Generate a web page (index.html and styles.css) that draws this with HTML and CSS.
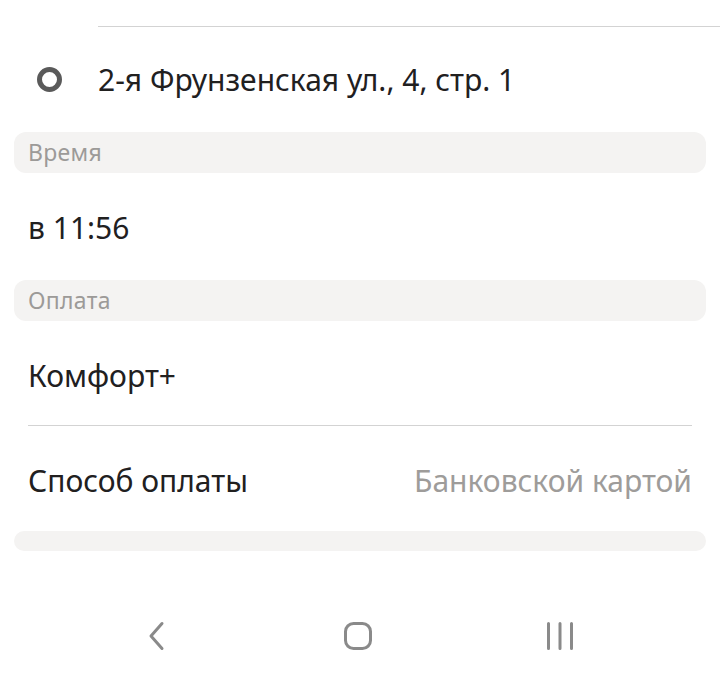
FILE: index.html
```html
<!DOCTYPE html>
<html lang="ru">
<head>
<meta charset="utf-8">
<link rel="stylesheet" href="styles.css">
</head>
<body>
<div class="screen">
  <div class="top-space"><div class="top-divider"></div></div>
  <div class="address-row">
    <span class="ring"></span>
    <span class="address">2-я Фрунзенская ул., 4, стр. 1</span>
  </div>
  <div class="section-head"><span>Время</span></div>
  <div class="row row-time"><span class="value">в 11:56</span></div>
  <div class="section-head"><span>Оплата</span></div>
  <div class="row row-tariff"><span class="value">Комфорт+</span></div>
  <div class="divider"></div>
  <div class="row row-pay">
    <span class="value">Способ оплаты</span>
    <span class="hint">Банковской картой</span>
  </div>
  <div class="section-head small"></div>
  <nav class="navbar">
    <svg class="nav-icon" width="30" height="30" viewBox="0 0 30 30"><path d="M21 2.5 L10 15 L21 27.5" fill="none" stroke="#8a8a8a" stroke-width="3" stroke-linecap="round" stroke-linejoin="round"/></svg>
    <svg class="nav-icon" width="30" height="30" viewBox="0 0 30 30"><rect x="2.5" y="2.5" width="25" height="25" rx="8" fill="none" stroke="#8a8a8a" stroke-width="3"/></svg>
    <svg class="nav-icon" width="30" height="30" viewBox="0 0 30 30"><path d="M3.5 2.5 V27.5 M15 2.5 V27.5 M26.5 2.5 V27.5" fill="none" stroke="#8a8a8a" stroke-width="3" stroke-linecap="round"/></svg>
  </nav>
</div>
</body>
</html>
```

FILE: styles.css
```css
* { box-sizing: border-box; }
html, body { margin: 0; padding: 0; background: #fff; }
body {
  font-family: "Noto Sans", "Open Sans", sans-serif;
  color: #21201f;
}
.screen { width: 720px; height: 678px; overflow: hidden; display: flex; flex-direction: column; }
.top-space { height: 27px; display: flex; align-items: flex-end; }
.top-divider { margin-left: 98px; flex: 1; height: 1px; background: #d3d3d3; }
.address-row { height: 105px; display: flex; align-items: center; }
.ring {
  width: 25px; height: 25px; margin-left: 37px; margin-right: 36px;
  border: 5.5px solid #5a5a5a; border-radius: 50%;
}
.address { font-size: 30px; }
.section-head {
  margin: 0 14px; height: 41px; border-radius: 12px; background: #f4f3f2;
  display: flex; align-items: center; padding-left: 14px; padding-bottom: 1px;
  font-size: 23px; letter-spacing: 0.3px; color: #9c9a98;
}
.section-head.small { height: 20px; border-radius: 10px; }
.row { display: flex; align-items: center; justify-content: space-between; padding: 0 28px; }
.row-time { height: 107px; padding-top: 2px; }
.row-tariff { height: 104px; padding-top: 4px; }
.row-pay { height: 105px; padding-top: 3px; }
.value { font-size: 30px; }
.hint { font-size: 30px; color: #9e9c9a; }
.divider { height: 1px; margin: 0 28px; background: #d3d3d3; }
.navbar {
  flex: 1; display: grid; grid-template-columns: repeat(3, 202px);
  justify-items: center; align-items: center; padding: 43px 0 0 55px;
}
.nav-icon { display: block; }
```
